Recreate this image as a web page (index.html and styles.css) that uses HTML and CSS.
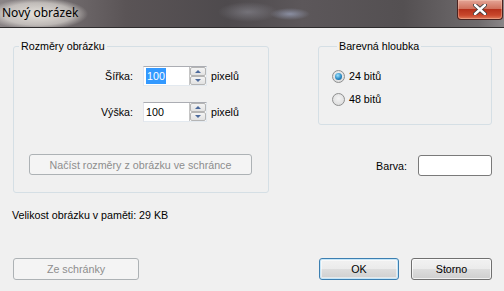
FILE: index.html
```html
<!DOCTYPE html>
<html lang="cs">
<head>
  <meta charset="UTF-8" />
  <title>Nový obrázek</title>
  <link rel="stylesheet" href="styles.css">
</head>
<body>
  <div class="titlebar">
    <span class="title">Nový obrázek</span>
    <button type="button" class="close-btn" aria-label="Zavřít">
      <svg width="14" height="11" viewBox="0 0 14 11">
        <path d="M2 1 L12 10 M12 1 L2 10" stroke="#3b3b3b" stroke-width="4.2" stroke-linecap="round"/>
        <path d="M2 1 L12 10 M12 1 L2 10" stroke="#ffffff" stroke-width="2.4" stroke-linecap="round"/>
      </svg>
    </button>
  </div>

  <div class="dialog">
    <div class="top-row">
      <fieldset class="group size-group">
        <legend>Rozměry obrázku</legend>
        <div class="size-grid">
          <label class="field-label">Šířka:</label>
          <div class="spin">
            <span class="spin-value"><span class="selected">100</span></span>
            <span class="spin-btns"><span class="spin-up"></span><span class="spin-down"></span></span>
          </div>
          <span class="unit">pixelů</span>

          <label class="field-label">Výška:</label>
          <div class="spin">
            <span class="spin-value">100</span>
            <span class="spin-btns"><span class="spin-up"></span><span class="spin-down"></span></span>
          </div>
          <span class="unit">pixelů</span>
        </div>
        <button type="button" class="btn load-btn" disabled>Načíst rozměry z obrázku ve schránce</button>
      </fieldset>

      <div class="right-col">
        <fieldset class="group depth-group">
          <legend>Barevná hloubka</legend>
          <div class="radio-row"><span class="radio checked"></span>24 bitů</div>
          <div class="radio-row"><span class="radio"></span>48 bitů</div>
        </fieldset>
        <div class="color-row">
          <span>Barva:</span>
          <span class="color-box"></span>
        </div>
      </div>
    </div>

    <p class="info">Velikost obrázku v paměti: 29 KB</p>

    <div class="footer">
      <button type="button" class="btn clip-btn" disabled>Ze schránky</button>
      <div class="footer-right">
        <button type="button" class="btn default ok-btn">OK</button>
        <button type="button" class="btn cancel-btn">Storno</button>
      </div>
    </div>
  </div>
</body>
</html>
```

FILE: styles.css
```css
body {
  margin: 0;
  background: #f0f0f0;
  font-family: 'Liberation Sans', Arial, sans-serif;
  font-size: 10.7px;
  color: #000;
  overflow: hidden;
}
.titlebar {
  height: 27px;
  display: flex;
  justify-content: space-between;
  align-items: flex-start;
  border-bottom: 1px solid #2e2c2d;
  background:
    radial-gradient(ellipse 50px 16px at 38px 14px, rgba(236, 232, 226, 0.95), rgba(236, 232, 226, 0.6) 70%, rgba(236, 232, 226, 0) 100%),
    radial-gradient(ellipse 30px 10px at 248px 12px, rgba(150, 150, 160, 0.5), rgba(150, 150, 160, 0)),
    radial-gradient(ellipse 20px 6px at 290px 14px, rgba(170, 180, 210, 0.6), rgba(170, 180, 210, 0)),
    linear-gradient(to right, #8a8486, #5a5456 25%, #4e4a4d 45%, #5c575a 60%, #545052 80%, #6f6b6d 95%, #8a8688);
}
.title {
  padding: 5px 0 0 2px;
  font-family: 'Noto Sans', sans-serif;
  font-size: 12px;
  line-height: 16px;
}
.close-btn {
  width: 46px;
  height: 20px;
  margin-right: 1px;
  padding: 0;
  border: 1px solid #4a2320;
  border-top: none;
  border-radius: 0 0 4px 4px;
  background: linear-gradient(to bottom, #e4a596, #d0725d 45%, #b6321c 50%, #c9472c 80%, #e07a5a);
  box-shadow: inset 0 0 0 1px rgba(255, 220, 200, 0.35);
  display: flex;
  align-items: center;
  justify-content: center;
}
.dialog {
  padding: 0 12px 0 13px;
}
.top-row {
  display: flex;
  margin-top: 10px;
}
.group {
  margin: 0;
  padding: 0;
  border: 1px solid #d5dfe5;
  border-radius: 3px;
  box-sizing: border-box;
}
.group legend {
  margin-left: 5px;
  padding: 0 2px;
  line-height: 16px;
}
.size-group {
  width: 257px;
  padding: 12px 0 17px;
}
.size-grid {
  display: grid;
  grid-template-columns: 119px 74px auto;
  row-gap: 16px;
  align-items: center;
}
.field-label {
  text-align: right;
}
.spin {
  margin-left: 10px;
  width: 64px;
  height: 20px;
  box-sizing: border-box;
  display: flex;
  background: #fff;
  border: 1px solid #e3e9ef;
  border-top-color: #abadb3;
  border-left-color: #e2e3ea;
}
.spin-value {
  flex: 1;
  padding-left: 2px;
  line-height: 18px;
}
.selected {
  background: #3399ff;
  color: #fff;
  padding: 2px 1px;
}
.spin-btns {
  width: 16px;
  display: flex;
  flex-direction: column;
  border-left: 1px solid #c5c5c5;
}
.spin-up,
.spin-down {
  flex: 1;
  position: relative;
  background: linear-gradient(to bottom, #f4f4f4, #e2e2e2);
  border: 1px solid #b5b5b5;
  border-radius: 2px;
}
.spin-up::after,
.spin-down::after {
  content: "";
  position: absolute;
  left: 4px;
  border-left: 3px solid transparent;
  border-right: 3px solid transparent;
}
.spin-up::after {
  top: 2px;
  border-bottom: 3px solid #4c6a9c;
}
.spin-down::after {
  top: 2px;
  border-top: 3px solid #4c6a9c;
}
.unit {
  margin-left: 4px;
}
.btn {
  font-family: inherit;
  font-size: 10.7px;
  color: #000;
  height: 22px;
  padding: 0;
  border: 1px solid #707070;
  border-radius: 3px;
  background: linear-gradient(to bottom, #f2f2f2, #ebebeb 50%, #dddddd 51%, #cfcfcf);
  box-shadow: inset 0 0 0 1px rgba(255, 255, 255, 0.7);
}
.btn[disabled] {
  color: #8d8d8d;
  border-color: #adb2b5;
  background: #f4f4f4;
  box-shadow: none;
}
.btn.default {
  border-color: #3c7fb1;
  box-shadow: inset 0 0 0 1px #c6e6f8, inset 0 0 0 2px rgba(255, 255, 255, 0.5);
}
.load-btn {
  display: block;
  width: 223px;
  height: 21px;
  margin: 32px 0 0 15px;
}
.right-col {
  width: 174px;
  margin-left: 49px;
}
.depth-group {
  width: 174px;
  padding: 14px 0 17px 13px;
}
.radio-row {
  display: flex;
  align-items: center;
  gap: 4px;
  line-height: 16px;
}
.radio-row + .radio-row {
  margin-top: 7px;
}
.radio {
  width: 13px;
  height: 13px;
  box-sizing: border-box;
  border-radius: 50%;
  border: 1px solid #8e8f8f;
  background: radial-gradient(circle at 50% 40%, #f4f4f4, #d6d6d6);
  position: relative;
}
.radio.checked::after {
  content: "";
  position: absolute;
  left: 2px;
  top: 2px;
  width: 7px;
  height: 7px;
  border-radius: 50%;
  background: radial-gradient(circle at 40% 35%, #9ee3ff, #2b8ac4 55%, #0b4e86);
}
.color-row {
  display: flex;
  justify-content: flex-end;
  align-items: center;
  gap: 11px;
  margin-top: 30px;
}
.color-box {
  width: 74px;
  height: 21px;
  box-sizing: border-box;
  background: #fff;
  border: 1px solid #7a7a7a;
  border-radius: 3px;
}
.info {
  margin: 14px 0 0 -1px;
  line-height: 16px;
}
.footer {
  display: flex;
  justify-content: space-between;
  margin-top: 35px;
}
.clip-btn {
  width: 126px;
}
.footer-right {
  display: flex;
  gap: 12px;
}
.ok-btn {
  width: 80px;
}
.cancel-btn {
  width: 81px;
}
```
